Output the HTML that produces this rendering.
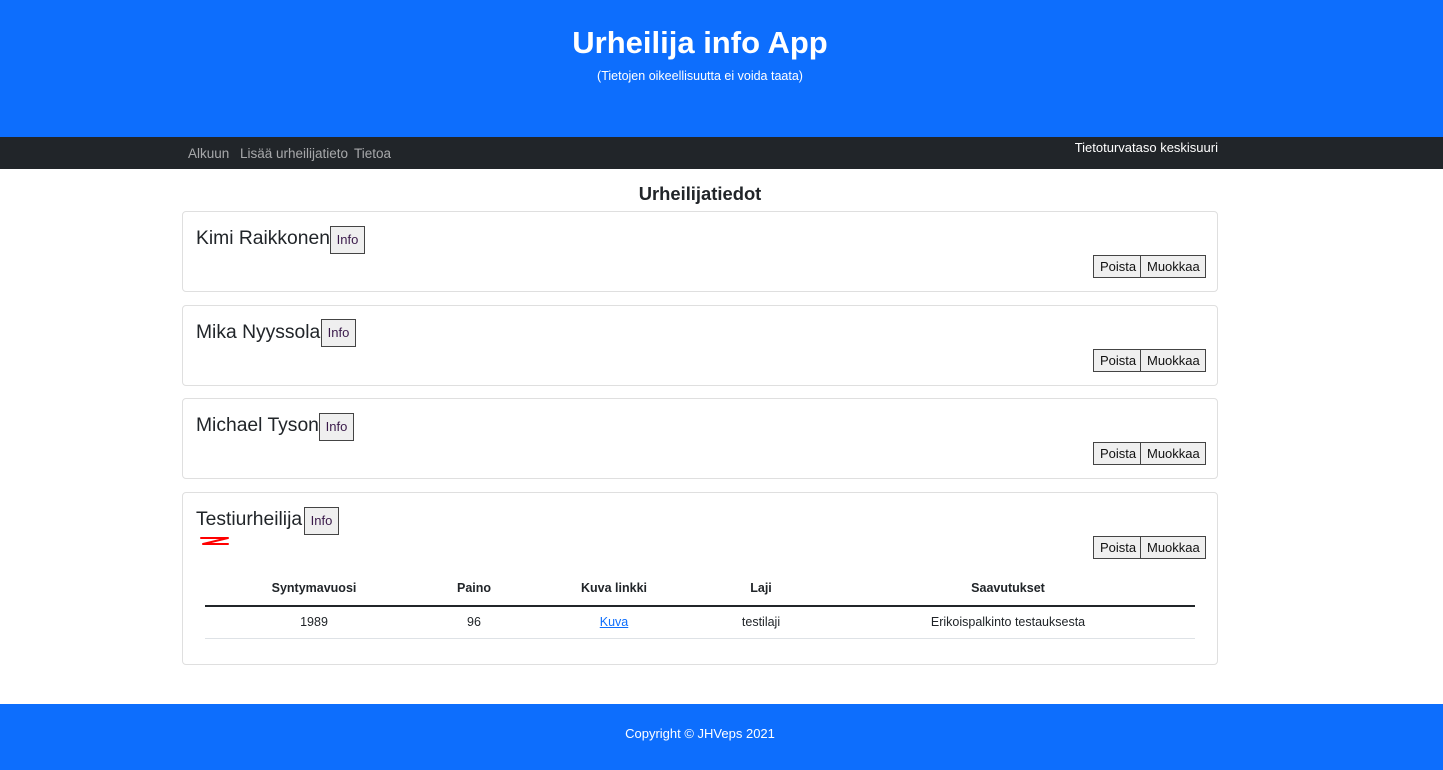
<!DOCTYPE html>
<html><head><meta charset="utf-8">
<style>
*{box-sizing:border-box;margin:0;padding:0}
body{width:1443px;height:770px;position:relative;font-family:"Liberation Sans",sans-serif;color:#212529;background:#fff;overflow:hidden}
.a{position:absolute;white-space:nowrap}
#hd{position:absolute;left:0;top:0;width:1443px;height:137px;background:#0d6efd;color:#fff;text-align:center}
#nav{position:absolute;left:0;top:137px;width:1443px;height:32px;background:#212529}
.nl{color:rgba(255,255,255,.6);font-size:13.5px;top:9px}
.card{position:absolute;left:182px;width:1036px;border:1px solid #dfdfdf;border-radius:4px}
.nm{font-size:19.3px;left:13px;top:16px}
.btn{position:absolute;background:#efefef;border:1px solid #444;font-size:13px;color:#111;height:23px;line-height:21px;padding:0 6px;text-align:center}
.info{height:28px;line-height:26px;width:35px;padding:0;color:#3a1a4a}
#ft{position:absolute;left:0;top:704px;width:1400px;height:66px;color:#fff;font-size:13px;text-align:center;line-height:60px}
.th{font-weight:bold;font-size:12.5px;transform:translateX(-50%)}
.td{font-size:12.5px;transform:translateX(-50%)}
</style></head><body>
<div id="hd">
<div class="a" style="left:0;width:1400px;top:25px;font-size:31px;font-weight:bold;text-align:center">Urheilija info App</div>
<div class="a" style="left:0;width:1400px;top:69px;font-size:12.5px;text-align:center">(Tietojen oikeellisuutta ei voida taata)</div>
</div>
<div id="nav">
<span class="a nl" style="left:188px">Alkuun</span>
<span class="a nl" style="left:240px">Lisää urheilijatieto</span>
<span class="a nl" style="left:354px">Tietoa</span>
<span class="a" style="right:225px;top:3px;color:#fff;font-size:13px">Tietoturvataso keskisuuri</span>
</div>
<div class="a" style="left:0;width:1400px;text-align:center;top:183px;font-size:18.4px;font-weight:bold">Urheilijatiedot</div>

<div class="card" style="top:211px;height:81px">
<span class="a nm">Kimi Raikkonen</span>
<div class="btn info" style="left:147px;top:14px">Info</div>
<div class="btn" style="left:910px;top:43px;width:48px">Poista</div>
<div class="btn" style="left:957px;top:43px;width:66px">Muokkaa</div>
</div>
<div class="card" style="top:305px;height:81px">
<span class="a nm">Mika Nyyssola</span>
<div class="btn info" style="left:138px;top:13px">Info</div>
<div class="btn" style="left:910px;top:43px;width:48px">Poista</div>
<div class="btn" style="left:957px;top:43px;width:66px">Muokkaa</div>
</div>
<div class="card" style="top:398px;height:81px">
<span class="a nm">Michael Tyson</span>
<div class="btn info" style="left:136px;top:14px">Info</div>
<div class="btn" style="left:910px;top:43px;width:48px">Poista</div>
<div class="btn" style="left:957px;top:43px;width:66px">Muokkaa</div>
</div>
<div class="card" style="top:492px;height:173px">
<span class="a nm">Testiurheilija</span>
<div class="btn info" style="left:121px;top:14px">Info</div>
<svg class="a" style="left:15px;top:42px" width="34" height="14" viewBox="0 0 34 14"><path d="M3 3 L30 3 L5 9 L30 9" fill="none" stroke="#f00" stroke-width="2" stroke-linecap="round" stroke-linejoin="round"/></svg>
<div class="btn" style="left:910px;top:43px;width:48px">Poista</div>
<div class="btn" style="left:957px;top:43px;width:66px">Muokkaa</div>
<div class="a" style="left:22px;top:112px;width:990px;height:2px;background:#212529"></div>
<div class="a" style="left:22px;top:145px;width:990px;height:1px;background:#dee2e6"></div>
<span class="a th" style="left:131px;top:88px">Syntymavuosi</span>
<span class="a th" style="left:291px;top:88px">Paino</span>
<span class="a th" style="left:431px;top:88px">Kuva linkki</span>
<span class="a th" style="left:578px;top:88px">Laji</span>
<span class="a th" style="left:825px;top:88px">Saavutukset</span>
<span class="a td" style="left:131px;top:122px">1989</span>
<span class="a td" style="left:291px;top:122px">96</span>
<span class="a td" style="left:431px;top:122px;color:#0d6efd;text-decoration:underline">Kuva</span>
<span class="a td" style="left:578px;top:122px">testilaji</span>
<span class="a td" style="left:825px;top:122px">Erikoispalkinto testauksesta</span>
</div>
<div style="position:absolute;left:0;top:704px;width:1443px;height:66px;background:#0d6efd"></div>
<div id="ft">Copyright © JHVeps 2021</div>
</body></html>
